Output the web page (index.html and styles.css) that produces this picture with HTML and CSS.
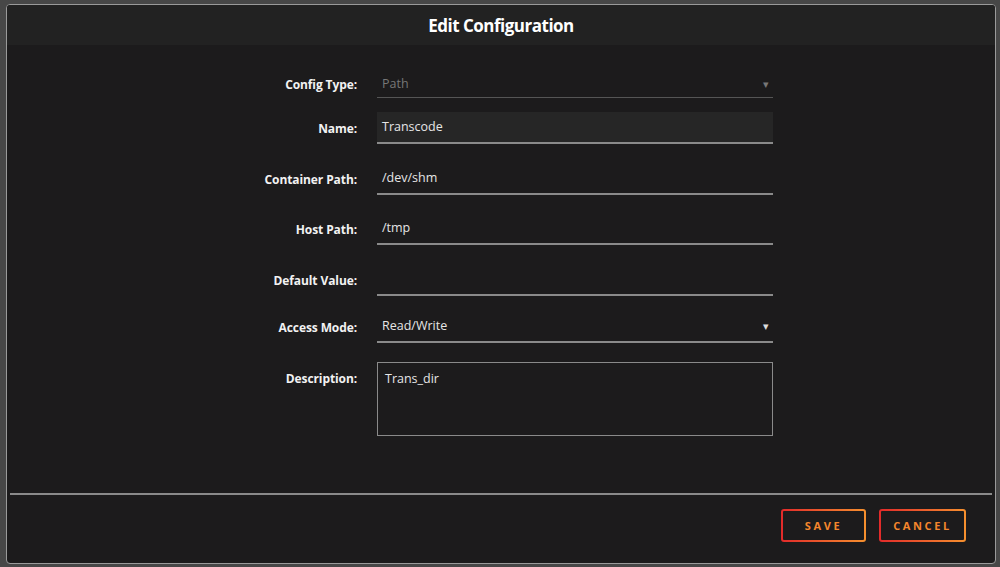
FILE: index.html
```html
<!DOCTYPE html>
<html lang="en">
<head>
    <meta charset="UTF-8">
    <meta name="viewport" content="width=device-width, initial-scale=1.0">
    <title>Edit Configuration</title>
    <link rel="stylesheet" href="styles.css">
</head>
<body>

    <div class="dialog">
        <!-- Title bar -->
        <div class="dialog-title">Edit Configuration</div>

        <form class="config-form">
            <div class="form-row row-type">
                <label>Config Type:</label>
                <div class="field select disabled">
                    <span>Path</span>
                    <span class="arrow">&#9662;</span>
                </div>
            </div>

            <div class="form-row row-name">
                <label>Name:</label>
                <div class="field filled"><span>Transcode</span></div>
            </div>

            <div class="form-row row-container">
                <label>Container Path:</label>
                <div class="field"><span>/dev/shm</span></div>
            </div>

            <div class="form-row">
                <label>Host Path:</label>
                <div class="field"><span>/tmp</span></div>
            </div>

            <div class="form-row row-default">
                <label>Default Value:</label>
                <div class="field"><span></span></div>
            </div>

            <div class="form-row row-mode">
                <label>Access Mode:</label>
                <div class="field select">
                    <span>Read/Write</span>
                    <span class="arrow">&#9662;</span>
                </div>
            </div>

            <div class="form-row row-desc">
                <label>Description:</label>
                <div class="textarea">Trans_dir</div>
            </div>
        </form>

        <div class="divider"></div>

        <!-- Buttons -->
        <div class="dialog-actions">
            <button class="btn btn-save" type="button">Save</button>
            <button class="btn btn-cancel" type="button">Cancel</button>
        </div>
    </div>

</body>
</html>
```

FILE: styles.css
```css
body {
    margin: 0;
    padding: 4px 4px 3px 6px;
    background-color: #474747;
    font-family: 'Open Sans', 'Liberation Sans', sans-serif;
    color: #f2f2f2;
    box-sizing: border-box;
    height: 567px;
    overflow: hidden;
}

.dialog {
    height: 560px;
    box-sizing: border-box;
    border: 1px solid #9a9a9a;
    border-radius: 4px;
    background-color: #1c1b1c;
    display: flex;
    flex-direction: column;
    overflow: hidden;
}

.dialog-title {
    height: 40px;
    line-height: 42px;
    background-color: #222222;
    text-align: center;
    font-size: 17px;
    font-weight: bold;
    color: #ffffff;
    letter-spacing: -0.5px;
}

.config-form {
    padding-top: 22px;
    display: flex;
    flex-direction: column;
    gap: 18px;
}

.form-row {
    display: grid;
    grid-template-columns: 350px 396px;
    column-gap: 20px;
    align-items: center;
}

.row-type {
    margin-bottom: -4px;
}

.row-type label {
    padding-top: 3px;
}

.row-container {
    margin-top: 1px;
}

.row-default {
    margin-top: 1px;
}

.row-mode {
    margin-top: -3px;
}

.row-desc {
    margin-top: 1px;
    align-items: start;
}

label {
    text-align: right;
    font-size: 12px;
    font-weight: bold;
    color: #f2f2f2;
    letter-spacing: -0.1px;
}

.row-desc label {
    padding-top: 8px;
}

.field {
    height: 32px;
    box-sizing: border-box;
    border-bottom: 2px solid #8a8a8a;
    display: flex;
    align-items: center;
    justify-content: space-between;
    padding: 0 4px 1px 5px;
    font-size: 12.5px;
    color: #e6e6e6;
}

.field.filled {
    background-color: #262626;
}

.field.disabled {
    height: 31px;
    padding-top: 3px;
    border-bottom: 1px solid #555555;
    color: #777777;
}

.arrow {
    font-size: 11px;
    color: #dddddd;
}

.disabled .arrow {
    color: #777777;
}

.textarea {
    height: 74px;
    box-sizing: border-box;
    border: 1px solid #8a8a8a;
    padding: 7px 7px;
    font-size: 12.5px;
    color: #e6e6e6;
}

.divider {
    margin: 57px 3px 0 3px;
    height: 2px;
    background-color: #8a8a8a;
}

.dialog-actions {
    display: flex;
    justify-content: flex-end;
    gap: 13px;
    padding: 14px 29px 0 0;
}

.btn {
    height: 33px;
    border: 2px solid transparent;
    border-radius: 3px;
    background: linear-gradient(#1c1b1c, #1c1b1c) padding-box,
                linear-gradient(90deg, #e22a2a, #f5902e) border-box;
    color: #f5862c;
    font-family: 'Open Sans', 'Liberation Sans', sans-serif;
    font-size: 11px;
    font-weight: bold;
    letter-spacing: 2.6px;
    text-transform: uppercase;
    cursor: pointer;
}

.btn-save {
    width: 85px;
}

.btn-cancel {
    width: 87px;
}
```
